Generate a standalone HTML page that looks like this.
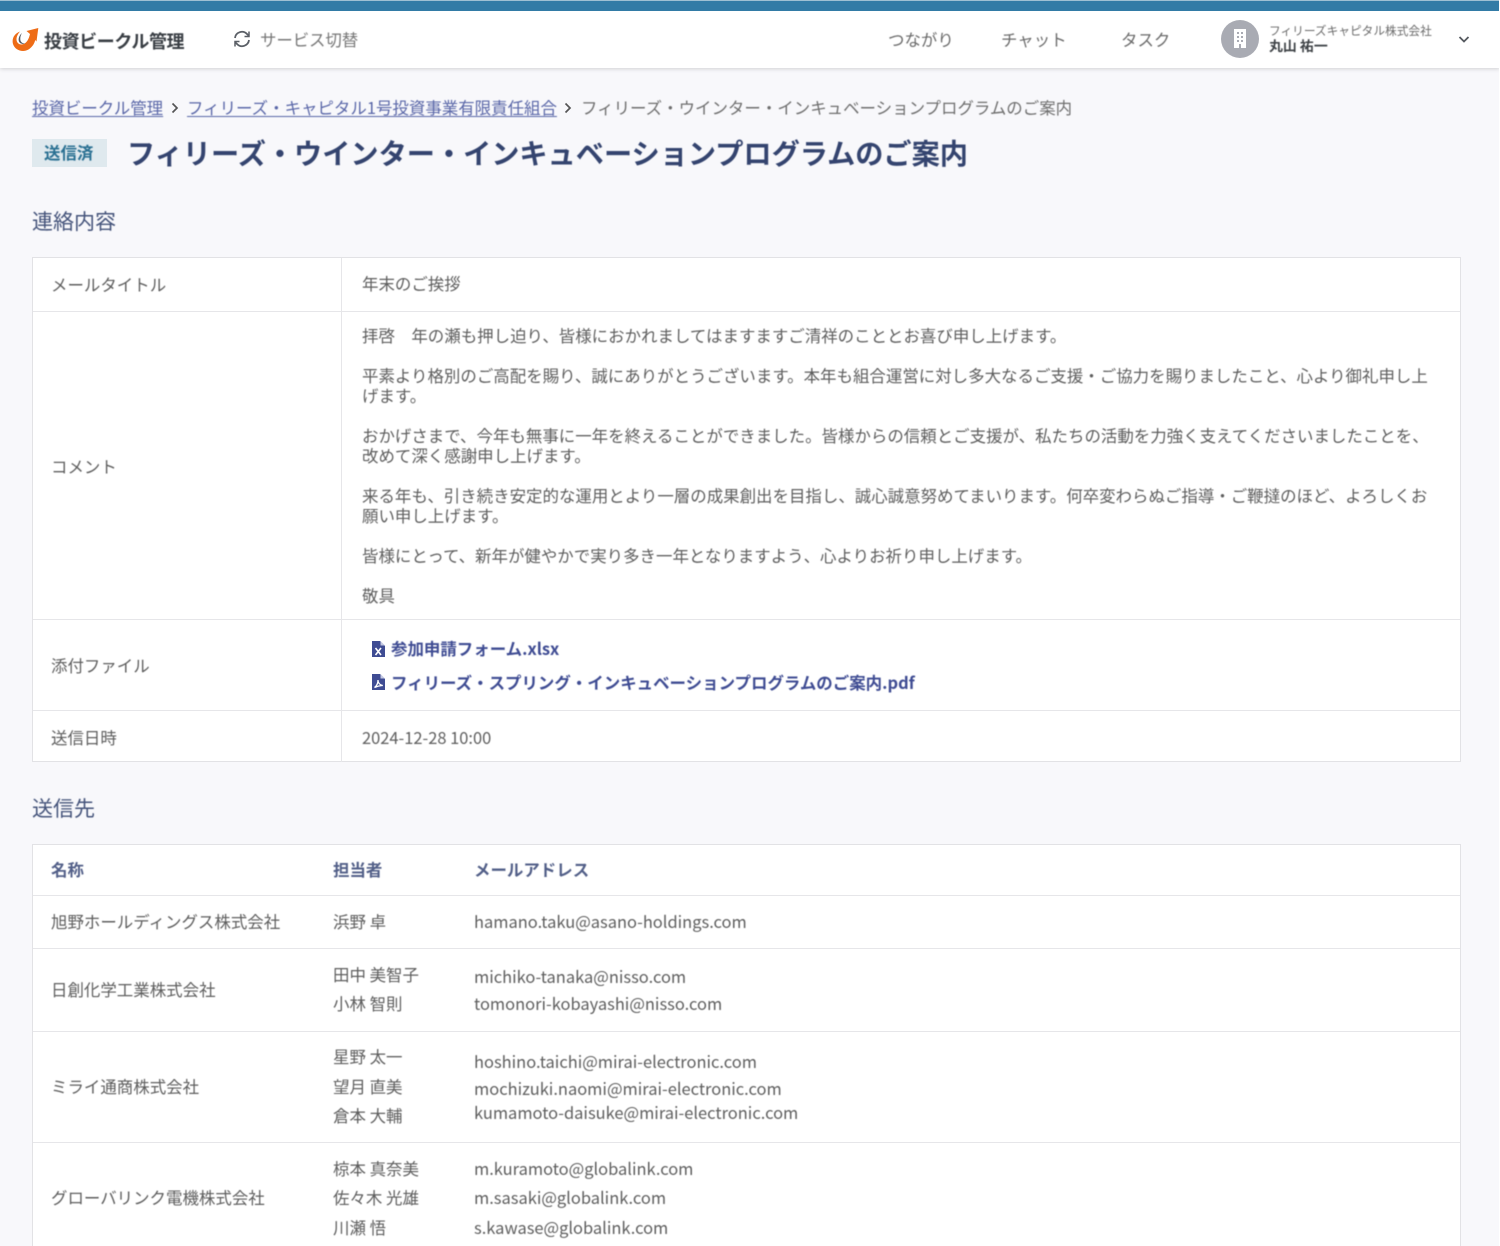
<!DOCTYPE html>
<html lang="ja"><head><meta charset="utf-8"><title>フィリーズ・ウインター・インキュベーションプログラムのご案内</title>
<style>
html,body{margin:0;padding:0;background:#fff}
#p{position:relative;width:1499px;height:1246px;overflow:hidden;background:#f8f8fb;font-family:"Liberation Sans","Noto Sans CJK JP",sans-serif;color:#5e5e5e}
#p,#p *{font-family:"Noto Sans CJK JP","Liberation Sans",sans-serif}
.t{position:absolute;white-space:nowrap;font-size:16.47px;line-height:20px;height:20px;filter:blur(.4px)}
.b{position:absolute;background:#e6e6e9}
.l{color:#3f4c93;font-weight:700}
.h{color:#525f88;font-weight:700}
.s{font-size:21px;line-height:28px;height:28px;color:#44537a}
svg{position:absolute}
</style></head><body><div id="p">
<div style="position:absolute;left:0;top:0;width:1500px;height:68px;background:#fff;box-shadow:0 1px 4px rgba(0,0,0,.16)"></div>
<div style="position:absolute;left:0;top:1px;width:1500px;height:10px;background:#327ba6"></div>
<div style="position:absolute;left:0;top:0;width:1500px;height:1px;background:#9fc0d3"></div>

<svg style="left:0;top:0;filter:blur(.3px)" width="50" height="60" viewBox="0 0 50 60"><path d="M20 31.500C14.500 33.500 11.500 38.500 13 44c1.800 6 9.500 9 15.500 5.500 4-2.500 6.200-6.500 6.700-9.500l1.300 1.500L38.300 28 26.500 31l3.500 3c-1 4.500-3 9-7 10.300-3.500 1-6.500-1.300-6.500-5 0-2.800 1.500-5.500 3.500-7.800z" fill="#ee6c16"/><path d="M22 33c-3 2.500-4 6-3 8.500 1 2.300 4 3 6.500 2-3 .2-5-1.500-5.200-4-.2-2.500.5-4.500 1.700-6.500z" fill="#555b63"/></svg>
<div class="t" style="left:44px;top:29px;font-size:18px;line-height:24px;height:24px;font-weight:700;color:#3a3f45;letter-spacing:-.42px">投資ビークル管理</div>
<svg style="left:233px;top:30px" width="18" height="18" viewBox="0 0 18 18" fill="none" stroke="#5a5f66" stroke-width="1.800"><path d="M2 8a7 7 0 0 1 12-4l2 2"/><path d="M16 1.500V6.500H11.500" stroke-width="1.500"/><path d="M16 10a7 7 0 0 1-12 4l-2-2"/><path d="M2 16.500V11.500H6.500" stroke-width="1.500"/></svg>
<div class="t" style="left:260px;top:29px;color:#777;letter-spacing:-.1px">サービス切替</div>
<div class="t" style="left:888px;top:29px;color:#6a6a6a">つながり</div>
<div class="t" style="left:1001px;top:29px;color:#6a6a6a">チャット</div>
<div class="t" style="left:1121px;top:29px;color:#6a6a6a">タスク</div>
<div style="position:absolute;left:1221px;top:20px;width:38px;height:38px;border-radius:50%;background:#a9abb3"></div>
<svg style="left:1233px;top:29px" width="14" height="20" viewBox="0 0 14 20"><rect x="1" y="0" width="12" height="19" fill="#fff"/><g fill="#a9abb3"><rect x="4" y="3" width="2" height="2"/><rect x="8" y="3" width="2" height="2"/><rect x="4" y="7" width="2" height="2"/><rect x="8" y="7" width="2" height="2"/><rect x="4" y="11" width="2" height="2"/><rect x="8" y="11" width="2" height="2"/><rect x="6" y="15" width="2" height="4"/></g></svg>
<div class="t" style="left:1269px;top:22px;font-size:11.700px;line-height:18px;height:18px;color:#6a6a6a">フィリーズキャピタル株式会社</div>
<div class="t" style="left:1269px;top:37px;font-size:13.900px;line-height:18px;height:18px;color:#3f4347;font-weight:700">丸山 祐一</div>
<svg style="left:1458px;top:35px" width="12" height="9" viewBox="0 0 12 9" fill="none" stroke="#55595f" stroke-width="1.800"><path d="M1.500 2 6 6.500 10.500 2"/></svg>

<div class="t" style="left:32px;top:97px;color:#5a67a8;text-decoration:underline;text-underline-offset:2px">投資ビークル管理</div>
<svg style="left:170px;top:102px" width="10" height="12" viewBox="0 0 10 12" fill="none" stroke="#555" stroke-width="1.700"><path d="M2.500 1.500 7 6l-4.500 4.500"/></svg>
<div class="t" style="left:187px;top:97px;color:#5a67a8;text-decoration:underline;text-underline-offset:2px">フィリーズ・キャピタル1号投資事業有限責任組合</div>
<svg style="left:563px;top:102px" width="10" height="12" viewBox="0 0 10 12" fill="none" stroke="#555" stroke-width="1.700"><path d="M2.500 1.500 7 6l-4.500 4.500"/></svg>
<div class="t" style="left:581px;top:97px;color:#6e6e6e">フィリーズ・ウインター・インキュベーションプログラムのご案内</div>

<div style="position:absolute;left:32px;top:139px;width:75px;height:28px;background:#dfe9ee"></div>
<div class="t" style="left:44px;top:142px;color:#2a7092;font-weight:700">送信済</div>
<div class="t" style="left:127px;top:133px;height:40px;font-size:28.180px;line-height:40px;font-weight:700;color:#34446f">フィリーズ・ウインター・インキュベーションプログラムのご案内</div>

<div class="t s" style="left:32px;top:207px">連絡内容</div>

<div style="position:absolute;left:32px;top:257px;width:1429px;height:505px;background:#fff;box-sizing:border-box;border:1px solid #e2e2e5"></div>
<div class="b" style="left:341px;top:258px;width:1px;height:504px"></div>
<div class="b" style="left:33px;top:311px;width:1427px;height:1px"></div>
<div class="b" style="left:33px;top:619px;width:1427px;height:1px"></div>
<div class="b" style="left:33px;top:710px;width:1427px;height:1px"></div>

<div class="t" style="left:51px;top:274px">メールタイトル</div>
<div class="t" style="left:362px;top:273px">年末のご挨拶</div>
<div class="t" style="left:51px;top:456px">コメント</div>
<div class="t" style="left:362px;top:325px">拝啓　年の瀬も押し迫り、皆様におかれましてはますますご清祥のこととお喜び申し上げます。</div>
<div class="t" style="left:362px;top:365px">平素より格別のご高配を賜り、誠にありがとうございます。本年も組合運営に対し多大なるご支援・ご協力を賜りましたこと、心より御礼申し上</div>
<div class="t" style="left:362px;top:385px">げます。</div>
<div class="t" style="left:362px;top:425px">おかげさまで、今年も無事に一年を終えることができました。皆様からの信頼とご支援が、私たちの活動を力強く支えてくださいましたことを、</div>
<div class="t" style="left:362px;top:445px">改めて深く感謝申し上げます。</div>
<div class="t" style="left:362px;top:485px">来る年も、引き続き安定的な運用とより一層の成果創出を目指し、誠心誠意努めてまいります。何卒変わらぬご指導・ご鞭撻のほど、よろしくお</div>
<div class="t" style="left:362px;top:505px">願い申し上げます。</div>
<div class="t" style="left:362px;top:545px">皆様にとって、新年が健やかで実り多き一年となりますよう、心よりお祈り申し上げます。</div>
<div class="t" style="left:362px;top:585px">敬具</div>

<div class="t" style="left:51px;top:655px">添付ファイル</div>
<svg style="left:372px;top:641px" width="13" height="16" viewBox="0 0 13 16"><path d="M0 0h8l5 5v11H0z" fill="#3f4c93"/><path d="M8.500 0v4.500H13z" fill="#c4c9e2"/><path d="M3.500 7 9 14M9 7l-5.500 7" stroke="#fff" stroke-width="1.600"/></svg>
<div class="t l" style="left:391px;top:638px">参加申請フォーム.xlsx</div>
<svg style="left:372px;top:674px" width="13" height="16" viewBox="0 0 13 16"><path d="M0 0h8l5 5v11H0z" fill="#3f4c93"/><path d="M8.500 0v4.500H13z" fill="#c4c9e2"/><path d="M2.500 13.500C4.500 12 6 9 6 6c0 3 2 5 4.800 5.500-3 0-5.800.8-8.300 2z" fill="none" stroke="#fff" stroke-width="1.300"/></svg>
<div class="t l" style="left:391px;top:672px">フィリーズ・スプリング・インキュベーションプログラムのご案内.pdf</div>

<div class="t" style="left:51px;top:727px">送信日時</div>
<div class="t" style="left:362px;top:727px">2024-12-28 10:00</div>

<div class="t s" style="left:32px;top:794px">送信先</div>

<div style="position:absolute;left:32px;top:844px;width:1429px;height:420px;background:#fff;box-sizing:border-box;border:1px solid #e2e2e5"></div>
<div class="b" style="left:33px;top:895px;width:1427px;height:1px"></div>
<div class="b" style="left:33px;top:948px;width:1427px;height:1px"></div>
<div class="b" style="left:33px;top:1031px;width:1427px;height:1px"></div>
<div class="b" style="left:33px;top:1142px;width:1427px;height:1px"></div>

<div class="t h" style="left:51px;top:859px">名称</div>
<div class="t h" style="left:333px;top:859px">担当者</div>
<div class="t h" style="left:474px;top:859px">メールアドレス</div>

<div class="t" style="left:51px;top:911px">旭野ホールディングス株式会社</div>
<div class="t" style="left:333px;top:911px">浜野 卓</div>
<div class="t" style="left:474px;top:911px">hamano.taku@asano-holdings.com</div>

<div class="t" style="left:51px;top:979px">日創化学工業株式会社</div>
<div class="t" style="left:333px;top:964px">田中 美智子</div>
<div class="t" style="left:333px;top:993px">小林 智則</div>
<div class="t" style="left:474px;top:966px">michiko-tanaka@nisso.com</div>
<div class="t" style="left:474px;top:993px">tomonori-kobayashi@nisso.com</div>

<div class="t" style="left:51px;top:1076px">ミライ通商株式会社</div>
<div class="t" style="left:333px;top:1046px">星野 太一</div>
<div class="t" style="left:333px;top:1076px">望月 直美</div>
<div class="t" style="left:333px;top:1105px">倉本 大輔</div>
<div class="t" style="left:474px;top:1051px">hoshino.taichi@mirai-electronic.com</div>
<div class="t" style="left:474px;top:1078px">mochizuki.naomi@mirai-electronic.com</div>
<div class="t" style="left:474px;top:1102px">kumamoto-daisuke@mirai-electronic.com</div>

<div class="t" style="left:51px;top:1187px">グローバリンク電機株式会社</div>
<div class="t" style="left:333px;top:1158px">椋本 真奈美</div>
<div class="t" style="left:333px;top:1187px">佐々木 光雄</div>
<div class="t" style="left:333px;top:1217px">川瀬 悟</div>
<div class="t" style="left:474px;top:1158px">m.kuramoto@globalink.com</div>
<div class="t" style="left:474px;top:1187px">m.sasaki@globalink.com</div>
<div class="t" style="left:474px;top:1217px">s.kawase@globalink.com</div>
</div></body></html>
